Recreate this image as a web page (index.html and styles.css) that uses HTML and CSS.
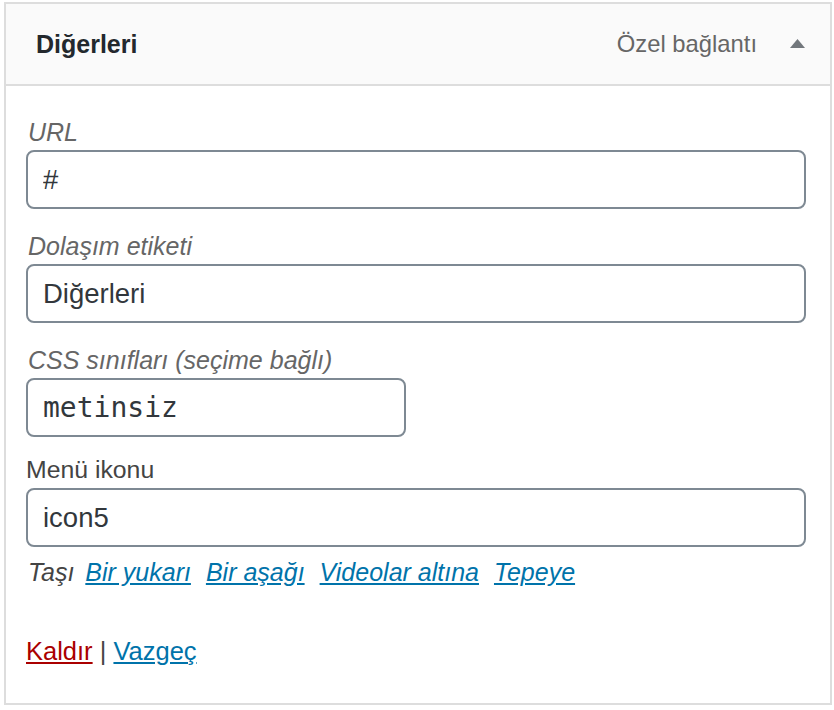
FILE: index.html
```html
<!DOCTYPE html>
<html lang="tr">
<head>
<meta charset="utf-8">
<title>Diğerleri</title>
<link rel="stylesheet" href="styles.css">
</head>
<body>
<div class="menu-item">
  <div class="handle">
    <span class="item-title">Diğerleri</span>
    <span class="item-controls">
      <span class="item-type">Özel bağlantı</span>
      <svg class="toggle" width="15" height="9" viewBox="0 0 15 9" aria-hidden="true"><polygon points="7.5,0 15,9 0,9"/></svg>
    </span>
  </div>
  <div class="settings">
    <label class="field">
      <span class="desc">URL</span>
      <input class="text" type="text" value="#">
    </label>
    <label class="field">
      <span class="desc">Dolaşım etiketi</span>
      <input class="text" type="text" value="Diğerleri">
    </label>
    <label class="field">
      <span class="desc">CSS sınıfları (seçime bağlı)</span>
      <input class="text mono half" type="text" value="metinsiz">
    </label>
    <label class="field field-custom">
      <span class="plain">Menü ikonu</span>
      <input class="text" type="text" value="icon5">
    </label>
    <div class="move">
      <span class="move-label">Taşı</span>
      <a href="#" class="move-link">Bir yukarı</a>
      <a href="#" class="move-link">Bir aşağı</a>
      <a href="#" class="move-link">Videolar altına</a>
      <a href="#" class="move-link">Tepeye</a>
    </div>
    <div class="actions">
      <a href="#" class="delete">Kaldır</a> <span class="sep">|</span> <a href="#" class="cancel">Vazgeç</a>
    </div>
  </div>
</div>
</body>
</html>
```

FILE: styles.css
```css
html, body {
  margin: 0;
  padding: 0;
  background: #ffffff;
}

body {
  font-family: "Liberation Sans", Arial, sans-serif;
  color: #444444;
}

.menu-item {
  margin: 2px 2px 0 4px;
  border: 2px solid #dddddd;
  background: #ffffff;
}

.handle {
  height: 80px;
  display: flex;
  align-items: center;
  justify-content: space-between;
  padding: 0 25px 0 30px;
  background: #fafafa;
  border-bottom: 2px solid #dddddd;
}

.item-title {
  font-size: 25px;
  font-weight: bold;
  color: #23282d;
}

.item-controls {
  display: flex;
  align-items: center;
}

.item-type {
  font-size: 23.8px;
  color: #666666;
  margin-right: 33px;
}

.toggle {
  display: block;
  fill: #72777c;
  margin-top: -1px;
}

.settings {
  padding: 30px 24px 36px 20px;
}

.field {
  display: block;
  margin-top: 21px;
}

.field:first-child {
  margin-top: 0;
}

.field-custom {
  margin-top: 17px;
}

.desc,
.plain {
  display: block;
  font-size: 25px;
  line-height: 32px;
  margin-bottom: 2px;
  padding-left: 2px;
}

.desc {
  font-style: italic;
  color: #666666;
}

.plain {
  color: #444444;
  padding-left: 0;
  font-size: 24.8px;
}

.text {
  display: block;
  box-sizing: border-box;
  width: 100%;
  height: 59px;
  margin: 0;
  padding: 0 15px;
  border: 2px solid #7e8993;
  border-radius: 8px;
  background: #ffffff;
  font-family: "Liberation Sans", Arial, sans-serif;
  font-size: 27.5px;
  color: #32373c;
  outline: none;
}

.text.mono {
  font-family: "DejaVu Sans Mono", "Liberation Mono", monospace;
  font-size: 28px;
}

.text.half {
  width: 380px;
}

.move {
  display: flex;
  align-items: baseline;
  margin-top: 9px;
  font-size: 25px;
  line-height: 32px;
  font-style: italic;
  padding-left: 2px;
}

.move-label {
  color: #444444;
  margin-right: 11px;
}

.move-link {
  color: #0073aa;
  text-decoration: underline;
  margin-right: 15px;
}

.actions {
  margin-top: 47px;
  font-size: 25.5px;
  line-height: 32px;
  color: #444444;
}

.delete {
  color: #aa0000;
  text-decoration: underline;
}

.cancel {
  color: #0073aa;
  text-decoration: underline;
}
```
